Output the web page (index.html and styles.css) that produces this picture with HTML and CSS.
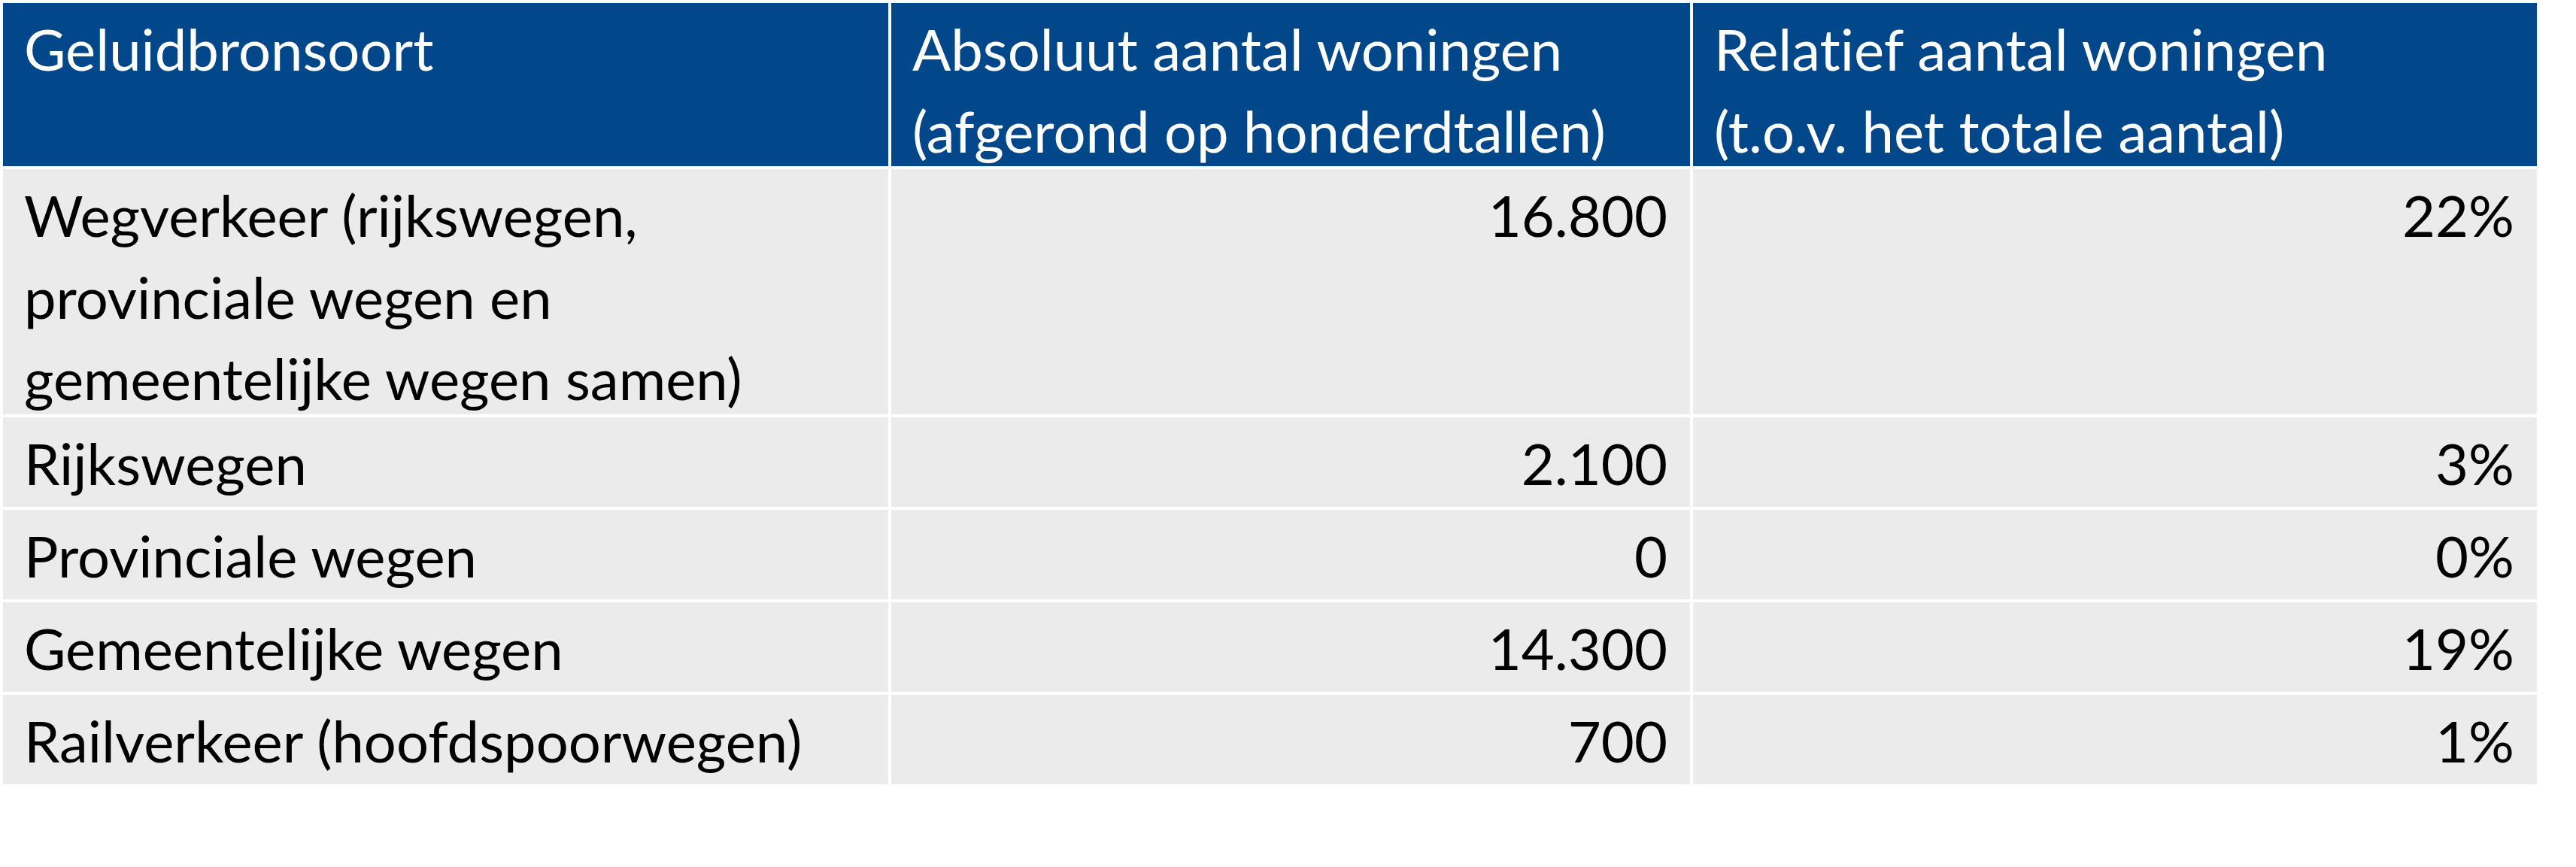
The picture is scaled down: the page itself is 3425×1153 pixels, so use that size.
FILE: index.html
```html
<!DOCTYPE html>
<html lang="nl">
<head>
<meta charset="utf-8">
<title>Geluidbronsoort</title>
<link rel="stylesheet" href="styles.css">
</head>
<body>
<table class="noise-table">
  <colgroup>
    <col class="col-source">
    <col class="col-abs">
    <col class="col-rel">
  </colgroup>
  <thead>
    <tr class="head-row">
      <th><div class="txt">Geluidbronsoort</div></th>
      <th><div class="txt">Absoluut aantal woningen<br>(afgerond op honderdtallen)</div></th>
      <th><div class="txt">Relatief aantal woningen<br>(t.o.v. het totale aantal)</div></th>
    </tr>
  </thead>
  <tbody>
    <tr>
      <td><div class="txt">Wegverkeer (rijkswegen,<br>provinciale wegen en<br>gemeentelijke wegen samen)</div></td>
      <td class="num"><div class="txt">16.800</div></td>
      <td class="num"><div class="txt">22%</div></td>
    </tr>
    <tr>
      <td><div class="txt">Rijkswegen</div></td>
      <td class="num"><div class="txt">2.100</div></td>
      <td class="num"><div class="txt">3%</div></td>
    </tr>
    <tr>
      <td><div class="txt">Provinciale wegen</div></td>
      <td class="num"><div class="txt">0</div></td>
      <td class="num"><div class="txt">0%</div></td>
    </tr>
    <tr>
      <td><div class="txt">Gemeentelijke wegen</div></td>
      <td class="num"><div class="txt">14.300</div></td>
      <td class="num"><div class="txt">19%</div></td>
    </tr>
    <tr>
      <td><div class="txt">Railverkeer (hoofdspoorwegen)</div></td>
      <td class="num"><div class="txt">700</div></td>
      <td class="num"><div class="txt">1%</div></td>
    </tr>
  </tbody>
</table>
</body>
</html>
```
FILE: styles.css
```css
html, body {
  margin: 0;
  padding: 0;
  background: #ffffff;
}

body {
  font-family: Lato, "Noto Sans", sans-serif;
  font-size: 76px;
  color: #000000;
  font-variant-ligatures: none;
  font-feature-settings: "liga" 0, "clig" 0;
}

.noise-table {
  border-collapse: separate;
  border-spacing: 4px;
  table-layout: fixed;
  width: 3377px;
}

.col-source { width: 1177px; }
.col-abs { width: 1062px; }
.col-rel { width: 1122px; }

.noise-table th,
.noise-table td {
  vertical-align: top;
  text-align: left;
  font-weight: normal;
  padding: 0 30px 0 28px;
  line-height: 108.5px;
  white-space: nowrap;
}

.noise-table th {
  background: #01478a;
  color: #ffffff;
}

.noise-table td {
  background: #ebebeb;
}

.noise-table tbody tr {
  height: 119px;
}

.noise-table td.num {
  text-align: right;
}

.txt {
  margin-top: 7px;
  margin-bottom: -7px;
}
```
